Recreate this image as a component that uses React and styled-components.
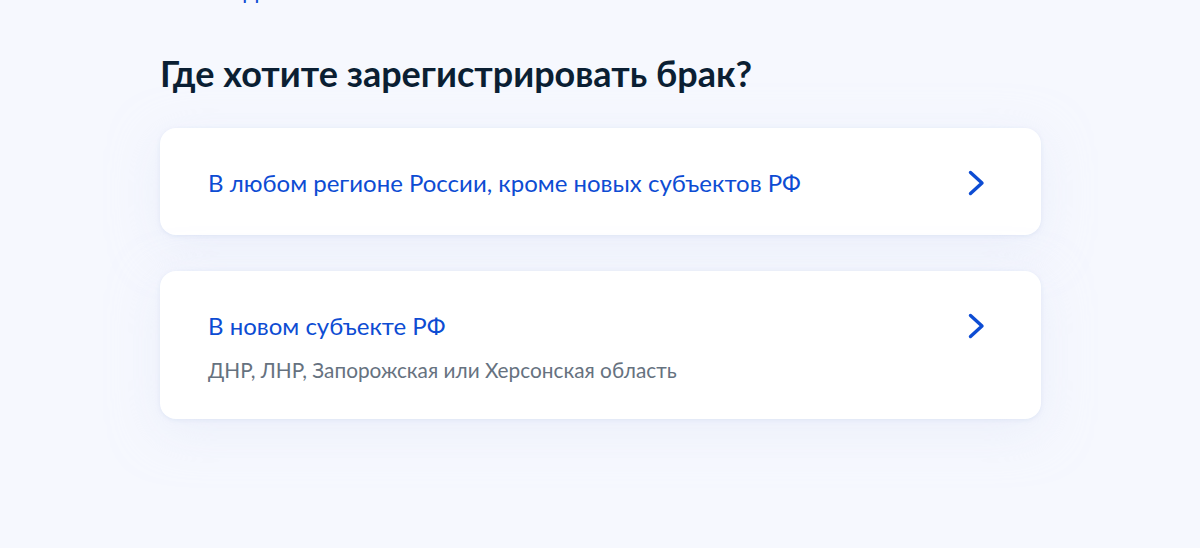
import styled, { createGlobalStyle } from 'styled-components'

const GlobalStyle = createGlobalStyle`
  html, body {
    margin: 0;
    padding: 0;
    background: #f6f8fe;
    font-family: Lato, 'Noto Sans', sans-serif;
  }
`

const Page = styled.div`
  min-height: 548px;
  overflow: hidden;
  padding: 0 160px;
  box-sizing: border-box;
`

// the page is scrolled a little: only the bottom of the back link shows
const Back = styled.a`
  display: block;
  margin-top: -26px;
  padding-left: 31px;
  font-size: 24px;
  line-height: 32px;
  color: #0d4cd3;
  text-decoration: none;
`

const Title = styled.h1`
  margin: 45px 0 33px;
  font-size: 36px;
  line-height: 44px;
  font-weight: 700;
  color: #0b1f33;
`

const List = styled.div`
  display: flex;
  flex-direction: column;
  gap: 36px;
  width: 881px;
`

const Card = styled.a`
  display: flex;
  align-items: flex-start;
  justify-content: space-between;
  padding: 39px 56px 36px 48px;
  background: #fff;
  border-radius: 16px;
  box-shadow: 0 1px 4px rgba(208, 219, 240, 0.55), 0 12px 48px rgba(226, 232, 248, 0.55);
  text-decoration: none;
  cursor: pointer;
`

const Texts = styled.div`
  display: flex;
  flex-direction: column;
  gap: 15px;
`

const CardTitle = styled.span`
  font-size: 24px;
  line-height: 32px;
  color: #0d4cd3;
`

const CardHint = styled.span`
  font-size: 20.8px;
  line-height: 26px;
  color: #66727f;
`

const Icon = styled.svg`
  flex: none;
  margin-top: 3px;
`

const Chevron = () => (
  <Icon width="17" height="26" viewBox="0 0 17 26" fill="none">
    <path d="M2.5 2.5 L14 13 L2.5 23.5" stroke="#0d4cd3" strokeWidth="3.4" strokeLinecap="round" strokeLinejoin="round" />
  </Icon>
)

const options = [
  { title: 'В любом регионе России, кроме новых субъектов РФ' },
  { title: 'В новом субъекте РФ', hint: 'ДНР, ЛНР, Запорожская или Херсонская область' },
]

export default function App() {
  return (
    <>
      <GlobalStyle />
      <Page>
        <Back>Назад</Back>
        <Title>Где хотите зарегистрировать брак?</Title>
        <List>
          {options.map(o => (
            <Card key={o.title}>
              <Texts>
                <CardTitle>{o.title}</CardTitle>
                {o.hint && <CardHint>{o.hint}</CardHint>}
              </Texts>
              <Chevron />
            </Card>
          ))}
        </List>
      </Page>
    </>
  )
}
